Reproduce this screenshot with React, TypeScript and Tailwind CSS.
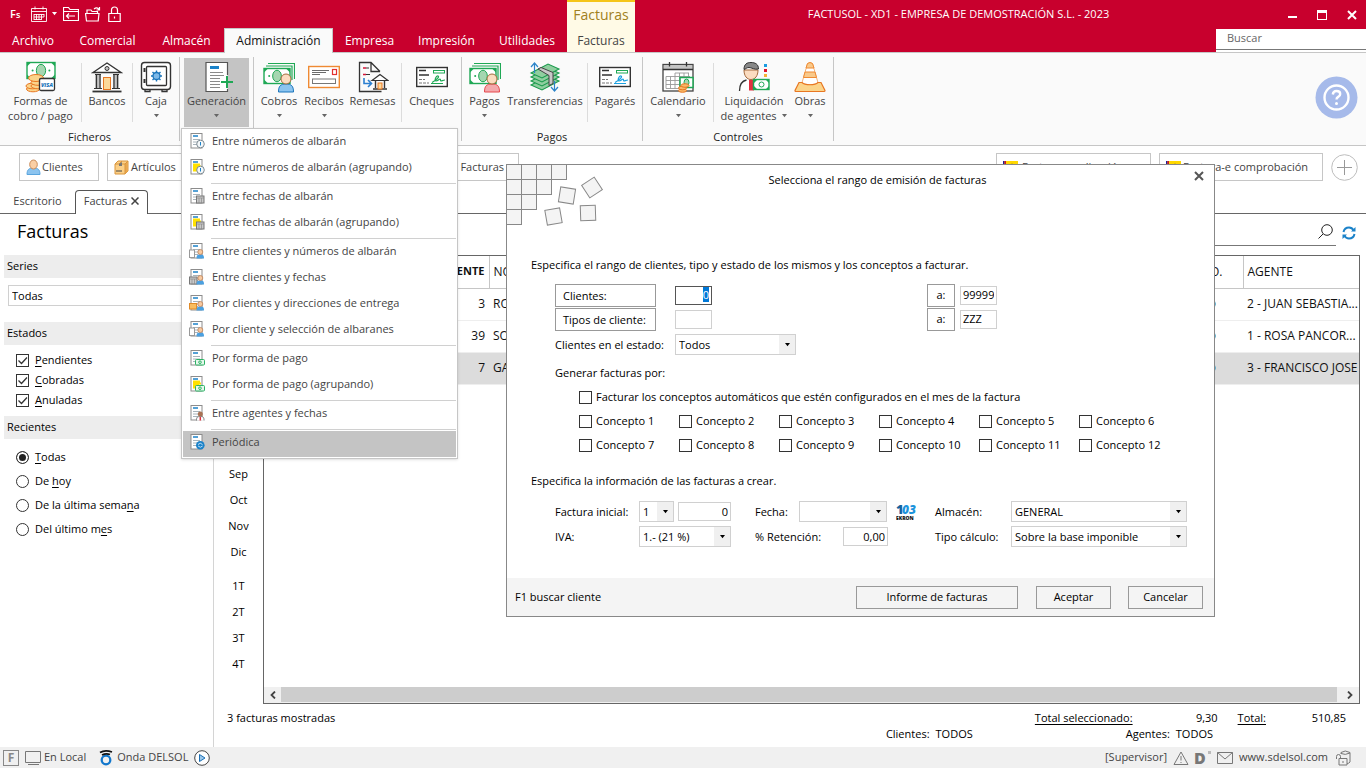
import { useEffect, useRef, type ReactNode } from 'react'

const FONT = "font-['Open_Sans','Noto_Sans',sans-serif]"

interface MenuEntry {
  label: string
  icon: string
  yellow?: boolean
}

const MENU: MenuEntry[][] = [
  [
    { label: 'Entre números de albarán', icon: 'clock' },
    { label: 'Entre números de albarán (agrupando)', icon: 'clock', yellow: true },
  ],
  [
    { label: 'Entre fechas de albarán', icon: 'calendar' },
    { label: 'Entre fechas de albarán (agrupando)', icon: 'calendar', yellow: true },
  ],
  [
    { label: 'Entre clientes y números de albarán', icon: 'client-doc' },
    { label: 'Entre clientes y fechas', icon: 'client-calendar' },
    { label: 'Por clientes y direcciones de entrega', icon: 'client-box' },
    { label: 'Por cliente y selección de albaranes', icon: 'client-doc' },
  ],
  [
    { label: 'Por forma de pago', icon: 'money' },
    { label: 'Por forma de pago (agrupando)', icon: 'money', yellow: true },
  ],
  [{ label: 'Entre agentes y fechas', icon: 'agent' }],
  [{ label: 'Periódica', icon: 'periodic' }],
]

const ROWS = [
  { code: '3', name: 'ROSARIO', agent: '2 - JUAN SEBASTIA...' },
  { code: '39', name: 'SONIA', agent: '1 - ROSA PANCOR...' },
  { code: '7', name: 'GABRIEL', agent: '3 - FRANCISCO JOSE', selected: true },
]

/* ---------- icons ---------- */

function Caret({ className = 'text-[#666]' }: { className?: string }) {
  return (
    <svg width="7" height="4" viewBox="0 0 7 4" className={className}>
      <path d="M1 0h5L3.5 3.2z" fill="currentColor" />
    </svg>
  )
}

function Icon32({ children }: { children: ReactNode }) {
  return (
    <svg width="32" height="32" viewBox="0 0 32 32" fill="none" className="shrink-0">
      {children}
    </svg>
  )
}

function Bill({ x, y, w, h }: { x: number; y: number; w: number; h: number }) {
  return (
    <g>
      <rect x={x} y={y} width={w} height={h} fill="#fff" stroke="#1fa855" strokeWidth="1.4" />
      <path
        d={`M${x} ${y}h4l-4 4zM${x + w} ${y}h-4l4 4zM${x} ${y + h}h4l-4-4zM${x + w} ${y + h}h-4l4-4z`}
        fill="#1fa855"
      />
      <ellipse cx={x + w / 2} cy={y + h / 2} rx={w / 6} ry={h / 2.6} fill="#a5d6b0" stroke="#1fa855" />
      <circle cx={x + w / 5} cy={y + h / 2} r="1" fill="#1fa855" />
      <circle cx={x + w - w / 5} cy={y + h / 2} r="1" fill="#1fa855" />
    </g>
  )
}

function FormasIcon() {
  return (
    <Icon32>
      <Bill x={2} y={1.5} w={28} h={16} />
      <g fill="#fbd48a" stroke="#e87722">
        <ellipse cx="8" cy="28" rx="6.500" ry="2.800" />
        <ellipse cx="7.500" cy="25" rx="6.500" ry="2.800" />
        <ellipse cx="13" cy="25" rx="7" ry="2.800" />
        <ellipse cx="13" cy="21.500" rx="7" ry="2.800" />
        <ellipse cx="11" cy="17" rx="7.500" ry="3.500" />
      </g>
      <rect x="14.500" y="17.500" width="15" height="12" rx="1.500" fill="#fff" stroke="#333" strokeWidth="1.300" />
      <text x="22" y="25.500" fontSize="5.500" fontWeight="800" fontStyle="italic" textAnchor="middle" fill="#1b75bb">VISA</text>
    </Icon32>
  )
}

function BankIcon() {
  return (
    <Icon32>
      <path d="M2 11.500L16 2l14 9.500z" fill="#fff" stroke="#333" strokeWidth="1.300" />
      <circle cx="16" cy="7.500" r="2" fill="#c4c4c4" stroke="#333" />
      <path d="M4 14h6v13H4zM22 14h6v13h-6z" fill="#c4c4c4" />
      <path d="M4 13.500h6M22 13.500h6M5.500 14v13M9 14v13M23 14v13M26.500 14v13M3 27.500h8M21 27.500h8" stroke="#333" strokeWidth="1.200" />
      <rect x="12.500" y="16.500" width="7" height="12" fill="#fcd99a" stroke="#e87722" />
      <path d="M1.500 30.500h29" stroke="#333" strokeWidth="1.800" />
    </Icon32>
  )
}

function SafeIcon() {
  return (
    <Icon32>
      <rect x="1.500" y="1.500" width="29" height="27" rx="3" fill="#fff" stroke="#333" strokeWidth="1.400" />
      <rect x="6.500" y="5.500" width="20" height="19" rx="1" stroke="#333" strokeWidth="1.300" />
      <path d="M4.500 7v4M4.500 18v4" stroke="#333" strokeWidth="2" />
      <path d="M5 29v1.500h5V29M22 29v1.500h5V29" stroke="#333" strokeWidth="1.300" />
      <path d="M16.500 9.500v11M11 15h11M12.500 11l8 8M20.500 11l-8 8" stroke="#1b75bb" strokeWidth="1.400" />
      <circle cx="16.500" cy="15" r="3.500" fill="#7db9e8" stroke="#1b75bb" strokeWidth="1.300" />
    </Icon32>
  )
}

function InvoiceAddIcon() {
  return (
    <Icon32>
      <path d="M5 1.500h21.500v29H5z" fill="#fff" />
      <path d="M26.500 14V1.500H5v29h21.500V28" stroke="#555" strokeWidth="1.200" />
      <path d="M9 5h9v3H9z" fill="#1b82c9" />
      <path d="M9 11.500h13M9 14.500h14M9 17.500h10M9 20.500h10M9 23.500h10M9 26.500h10" stroke="#8a8a8a" />
      <path d="M26 15v12M20 21h12" stroke="#1fa855" strokeWidth="2" />
    </Icon32>
  )
}

function BillPersonIcon({ red }: { red?: boolean }) {
  return (
    <Icon32>
      <path d="M5 2.500h26.500V18M3 5h26v14" stroke="#1fa855" strokeWidth="1.200" />
      <Bill x={1} y={7.500} w={26} h={15} />
      <path d="M15.500 31c0-6 2-8 7.500-8s7.500 2 7.500 8z" fill={red ? '#f4a9ad' : '#8cc4ef'} stroke={red ? '#e5484d' : '#1b75bb'} />
      <circle cx="23" cy="18" r="5" fill="#fbdcc0" stroke="#a56b3f" />
    </Icon32>
  )
}

function ReceiptIcon() {
  return (
    <Icon32>
      <rect x="0.700" y="5.500" width="30.600" height="21" fill="#fff" stroke="#ef8a33" strokeWidth="1.400" />
      <path d="M4 9.500h17M4 11.500h14M4 13.500h8" stroke="#444" strokeWidth="0.800" />
      <rect x="24.500" y="8.500" width="4" height="5" stroke="#e23030" strokeWidth="1.200" />
      <rect x="4.500" y="18" width="23" height="4.500" stroke="#777" />
    </Icon32>
  )
}

function RemesasIcon() {
  return (
    <Icon32>
      <path d="M23 10.500L14 1.500H2.500v29h22M14 2v8.500h9" stroke="#333" strokeWidth="1.300" />
      <path d="M6 7h3M6 13.500h3" stroke="#d6173a" strokeWidth="1.500" />
      <path d="M9 7h3M9 13.500h4" stroke="#333" />
      <path d="M7 17v5.500h7M11 19l3.500 3.500L11 26" stroke="#2c7fd0" strokeWidth="1.600" />
      <path d="M15 19.500l8-6 8 6z" fill="#fff" stroke="#333" strokeWidth="1.200" />
      <path d="M18.500 20v7M27.500 20v7M16 28h14" stroke="#333" strokeWidth="1.400" />
      <rect x="21" y="22" width="4" height="6" fill="#fcd99a" stroke="#e87722" />
    </Icon32>
  )
}

function ChequeIcon({ blue }: { blue?: boolean }) {
  return (
    <Icon32>
      <rect x="0.700" y="6.500" width="30.600" height="19" fill="#fff" stroke="#333" strokeWidth="1.400" />
      <path d="M3 9.500h7M3 14h10" stroke="#333" strokeWidth="1.300" />
      <path d="M3 18.500h6M3 22h10" stroke="#777" strokeDasharray="3 1" />
      <rect x="17.500" y="9.500" width="11" height="2.500" stroke="#1fa855" />
      <path d="M16 21.500c4-2 8-6 6-6.500s-4 5-2 5 3-2 4-2 0 2 1 2 2-1 4-1M15 22.500h12" stroke={blue ? '#1ba0e0' : '#1fa855'} strokeWidth="1.200" />
    </Icon32>
  )
}

function TransferIcon() {
  return (
    <Icon32>
      {[24, 20, 16, 12].map((y) => (
        <path key={y} d={`M2 ${y}l17-9 11 5-17 9z`} fill="#8fce9f" stroke="#1a9a4c" strokeWidth="1.100" />
      ))}
      <path d="M9 8l3-1.500 12 5v11l-4 2v-10z" fill="#c8c8c8" stroke="#444" />
      <path d="M5.500 12V2M2 6l3.500-4L9 6M25.500 20v10M22 26l3.500 4 3.500-4" stroke="#2c84c9" strokeWidth="1.200" />
    </Icon32>
  )
}

function CalendarIcon() {
  return (
    <Icon32>
      <rect x="1" y="3.500" width="30" height="26.500" fill="#fff" stroke="#444" strokeWidth="1.300" />
      <path d="M2 4h28v4.500H2z" fill="#c4c4c4" />
      <path d="M1 8.500h30M7.500 1v4.500M24.500 1v4.500" stroke="#333" strokeWidth="1.300" />
      <path d="M4 15.500h24M4 19.500h24M4 23.500h14M4 27.500h14M4 15.500v12M8.500 15.500v12M13 12v15.500M17.500 12v15.500M22 12v8M26.500 12v8M13 12h14" stroke="#999" strokeWidth="0.900" />
      <rect x="18" y="16.500" width="13" height="10" fill="#fff" stroke="#1fa855" strokeWidth="1.500" />
      <ellipse cx="24.500" cy="21.500" rx="2.500" ry="3.500" fill="#a5d6b0" stroke="#1fa855" />
      <g fill="#f9b868" stroke="#e87722">
        <ellipse cx="20.500" cy="29.500" rx="4" ry="1.800" />
        <ellipse cx="20.500" cy="27" rx="4" ry="1.800" />
        <ellipse cx="23" cy="24.500" rx="4" ry="1.800" />
      </g>
    </Icon32>
  )
}

function AgentIcon() {
  return (
    <Icon32>
      <path d="M1.500 30c0-8 2.500-12 11-12s10 3 11 8" fill="#fff" />
      <path d="M1.500 30c0-7 2-10 7-11" stroke="#333" strokeWidth="1.300" />
      <path d="M11 18.500h4l1 11h-5z" fill="#e23040" />
      <path d="M6 9c0 6 3 9.500 7 9.500S20 15 20 9z" fill="#fbdcc0" stroke="#a56b3f" />
      <path d="M6 8.500C6 3 9 1.500 13 1.500S20.500 3 20.500 8c-4 1-7-1.500-9.500-1.500S8 8 6 8.500z" fill="#888" stroke="#333" />
      <path d="M26 3h3v3h-3z" fill="#1b9be0" />
      <path d="M26 8h3v3h-3z" fill="#e0152b" />
      <path d="M26 13h3v3h-3z" fill="#f5b335" />
      <rect x="15.500" y="18.500" width="15.500" height="10" fill="#fff" stroke="#1fa855" strokeWidth="1.400" />
      <path d="M16 19h3l-3 3zM31 19h-3l3 3zM16 28h3l-3-3zM31 28h-3l3-3z" fill="#1fa855" />
      <circle cx="23.500" cy="23.500" r="2.500" stroke="#1fa855" />
    </Icon32>
  )
}

function ConeIcon() {
  return (
    <Icon32>
      <path d="M13.500 2.500q2.500-2 5 0l6 21h-17z" fill="#fff" stroke="#f3b27a" />
      <path d="M13.500 2.500q2.500-2 5 0l1.500 4.500h-8zM11 11h10l1.500 5.500h-13z" fill="#f9c98a" stroke="#ef8a33" />
      <path d="M5 21.500h3c3 3 13 3 16 0h3l4 8q0 1-1 1H2q-1 0-1-1z" fill="#fbd48a" stroke="#e87722" strokeWidth="1.200" />
    </Icon32>
  )
}

function PersonIcon() {
  return (
    <svg width="15" height="16" viewBox="0 0 15 16">
      <path d="M1 15.500c0-5 2-6.500 6.500-6.500s6.500 1.500 6.500 6.500z" fill="#8cc4ef" stroke="#5aa5de" />
      <ellipse cx="7.500" cy="5.500" rx="3.800" ry="4.500" fill="#fbcfa4" stroke="#c98b59" />
    </svg>
  )
}

function BoxIcon() {
  return (
    <svg width="15" height="15" viewBox="0 0 15 15">
      <path d="M1 4l3-3h10v10l-3 3H1z" fill="#fbcf86" stroke="#d9953c" />
      <path d="M11 4l3-3v10l-3 3z" fill="#e9a850" />
      <path d="M1 4h10v10M11 4l3-3M5 4l3-3" fill="none" stroke="#d9953c" />
      <path d="M5 4l3-2v4H5z" fill="#777" />
      <path d="M3 10v2M5 10v2M7 10v2" stroke="#444" />
    </svg>
  )
}

function MenuIcon({ entry }: { entry: MenuEntry }) {
  const client = entry.icon.startsWith('client')
  return (
    <svg width="16" height="16" viewBox="0 0 16 16" fill="none">
      <rect x="2" y="0.500" width="11" height="14.500" fill="#fff" stroke="#8c8c8c" />
      <path d="M4 3h5" stroke="#1b82c9" strokeWidth="1.500" />
      {entry.yellow ? (
        <path d="M4 5.500h7M4 7.500h8M4 9.500h6M4 11.500h5" stroke="#ffe100" strokeWidth="2" />
      ) : (
        <path d="M4 6.500h7M4 9h7M4 11.500h5" stroke="#a8b4bb" />
      )}
      {entry.icon === 'clock' && (
        <>
          <circle cx="11.500" cy="11" r="3.800" fill="#f4f8fa" stroke="#7d8a92" />
          <path d="M11.500 9v3.500" stroke="#1b82c9" />
        </>
      )}
      {(entry.icon === 'calendar' || entry.icon === 'client-calendar') && (
        <g transform={client ? 'translate(-7 0)' : undefined}>
          <rect x="7.500" y="8" width="7.500" height="7" fill="#c9c9c9" stroke="#777" />
          <path d="M7.500 10h7.500M10 10v5M12.500 10v5" stroke="#8a8a8a" strokeWidth="0.700" />
        </g>
      )}
      {entry.icon === 'client-doc' && <rect x="0.500" y="7" width="5" height="7.500" fill="#fff" stroke="#999" />}
      {entry.icon === 'client-box' && <rect x="0.500" y="8.500" width="7" height="5.500" fill="#f9bd5f" stroke="#e08a28" />}
      {client && (
        <>
          <path d="M7.500 15.500c0-3.500 1-4 3.800-4s3.700.5 3.700 4z" fill="#4ba0e0" />
          <circle cx="11.300" cy="9" r="2.500" fill="#f6c9a0" stroke="#b5764a" strokeWidth="0.700" />
        </>
      )}
      {entry.icon === 'money' && (
        <>
          <rect x="6.500" y="9.500" width="9" height="5.500" rx="1" fill="#e6f7ec" stroke="#2bb364" />
          <circle cx="11" cy="12.200" r="1.300" stroke="#2bb364" />
        </>
      )}
      {entry.icon === 'agent' && (
        <>
          <path d="M7.500 15.500c0-3.500 1-4 3.800-4s3.700.5 3.700 4" fill="#fff" stroke="#777" />
          <path d="M11.300 12v3.500" stroke="#e23040" strokeWidth="1.500" />
          <circle cx="11.300" cy="9" r="2.500" fill="#a87254" />
        </>
      )}
      {entry.icon === 'periodic' && (
        <>
          <circle cx="11.300" cy="11.200" r="4.300" fill="#1b82c9" />
          <path d="M9 10.500q2.300-2.500 4.500 0M13.600 12q-2.300 2.500-4.500 0" stroke="#bfe0f5" />
        </>
      )}
    </svg>
  )
}

/* ---------- ribbon ---------- */

function RibbonButton({ icon, label, second, caret, className }: {
  icon: ReactNode
  label: string
  second?: string
  caret?: boolean
  className: string
}) {
  return (
    <button className={`flex h-[69px] shrink-0 flex-col items-center whitespace-nowrap pt-[3px] text-[11px] leading-[15px] text-[#444] ${className}`}>
      {icon}
      <span>{label}</span>
      <span className="flex h-[15px] items-center gap-1">
        {second}
        {caret && <Caret />}
      </span>
    </button>
  )
}

function RibbonGroup({ title, children }: { title: string; children: ReactNode }) {
  return (
    <div className="my-1 flex shrink-0 flex-col border-r border-[#c6c6c6] pt-px">
      <div className="flex">{children}</div>
      <div className="pt-[2px] text-center text-[11px] leading-4 text-[#222]">{title}</div>
    </div>
  )
}

function RibbonSep() {
  return <span className="mt-[5px] h-[59px] w-px shrink-0 bg-[#dcdcdc]" />
}

function Tab({ label, className }: { label: string; className: string }) {
  return <button className={`h-6 shrink-0 pt-[2px] text-center text-xs text-white ${className}`}>{label}</button>
}

function Header() {
  return (
    <header className="flex h-[52px] bg-[#c8002d] text-white">
      <div className="flex w-[567px] shrink-0 flex-col">
        <div className="flex h-7 items-center pl-[10px]">
          <span className="w-[21px] text-[11px] font-semibold">F<span className="text-[9px]">s</span></span>
          <button aria-label="Calendario" className="flex items-center gap-1">
            <svg width="16" height="16" viewBox="0 0 16 16" fill="none" stroke="#fff">
              <path d="M.5 2.500h15v13H.5zM.5 5.500h15M4 .5v3M12 .5v3M3 8.500h10M3 11h10M3 13.500h7M3 8v6M5.500 8v6M8 8v6M10.500 8v6M13 8v3" strokeWidth="0.900" />
            </svg>
            <Caret className="text-white" />
          </button>
          <button aria-label="Volver" className="ml-[5px]">
            <svg width="16" height="16" viewBox="0 0 16 16" fill="none" stroke="#fff" strokeWidth="1.200">
              <path d="M.5 14.500v-13h5l1.500 2h8.500v11zM.5 5.500h15M3.500 10H12M6 7.500L3.500 10 6 12.500" />
            </svg>
          </button>
          <button aria-label="Abrir" className="ml-[6px]">
            <svg width="16" height="16" viewBox="0 0 16 16" fill="none" stroke="#fff" strokeWidth="1.200">
              <path d="M2 7.500V4h4l1 1.500h5.500v2M.5 7.500h13.500l-.8 7.500H1.500zM9 3q3-2.500 5 .5M14.500 1v3H11.500" />
            </svg>
          </button>
          <button aria-label="Bloquear" className="ml-[7px]">
            <svg width="13" height="16" viewBox="0 0 13 16" fill="none" stroke="#fff" strokeWidth="1.200">
              <path d="M.8 7.500h11.400v8H.8zM3.500 7.500V4a3 3 0 016 0v3.500M6.500 10.500v2" />
            </svg>
          </button>
        </div>
        <nav className="flex h-6">
          <Tab label="Archivo" className="w-[66px]" />
          <Tab label="Comercial" className="w-[83px]" />
          <Tab label="Almacén" className="w-[75px]" />
          <button className="relative z-10 -mb-px h-[25px] w-[109px] shrink-0 border border-b-0 border-[#c6c6c6] bg-[#fafafa] text-center text-xs text-[#111]">
            Administración
          </button>
          <Tab label="Empresa" className="w-[73px]" />
          <Tab label="Impresión" className="w-[81px]" />
          <Tab label="Utilidades" className="w-[80px]" />
        </nav>
      </div>
      <div className="flex w-[68px] shrink-0 flex-col items-center border-t-2 border-[#f5c518] bg-[#fffae6]">
        <span className="h-[26px] text-sm leading-[26px] text-[#a08020]">Facturas</span>
        <button className="h-6 pt-[2px] text-xs text-[#444]">Facturas</button>
      </div>
      <div className="flex min-w-0 flex-1 flex-col">
        <div className="flex h-[29px] items-center">
          <h1 className="flex-1 truncate text-center text-[11px]">FACTUSOL - XD1 - EMPRESA DE DEMOSTRACIÓN S.L. - 2023</h1>
          <div className="flex w-[84px] items-center gap-5 pl-[6px]">
            <button aria-label="Minimizar"><span className="mt-1 block h-[2px] w-[9px] bg-white" /></button>
            <button aria-label="Maximizar"><span className="block h-[10px] w-[10px] border border-t-[3px] border-white" /></button>
            <button aria-label="Cerrar">
              <svg width="10" height="10" viewBox="0 0 10 10" stroke="#fff" strokeWidth="2"><path d="M1 1l8 8M9 1L1 9" /></svg>
            </button>
          </div>
        </div>
        <div className="flex h-[23px] w-[150px] flex-col self-end bg-white">
          <input aria-label="Buscar" placeholder="Buscar" className="h-[21px] w-full border-b border-[#777] px-[11px] pb-[3px] text-[11px] text-[#333] outline-none placeholder:text-[#666]" />
        </div>
      </div>
    </header>
  )
}

function DropMenu() {
  return (
    <div role="menu" className="absolute left-[181px] top-[75px] z-20 w-[277px] border border-[#c6c6c6] bg-white p-px shadow-sm">
      {MENU.map((group, gi) => (
        <div key={gi}>
          {gi > 0 && <div className="ml-7 h-[3px] py-px"><div className="h-px bg-[#d0d0d0]" /></div>}
          {group.map((entry) => (
            <button
              key={entry.label}
              role="menuitem"
              className={`flex h-[26px] w-full items-center pb-1 pl-[6px] text-left text-[11px] text-[#444] ${entry.icon === 'periodic' ? 'bg-[#c4c4c4]' : ''}`}
            >
              <MenuIcon entry={entry} />
              <span className="ml-[7px] whitespace-nowrap">{entry.label}</span>
            </button>
          ))}
        </div>
      ))}
    </div>
  )
}

function Ribbon() {
  return (
    <div className="relative flex h-[94px] border-y border-[#c6c6c6] bg-[#fafafa]">
      <RibbonGroup title="Ficheros">
        <RibbonButton icon={<FormasIcon />} label="Formas de" second="cobro / pago" className="w-[81px]" />
        <RibbonSep />
        <RibbonButton icon={<BankIcon />} label="Bancos" className="w-[50px]" />
        <RibbonSep />
        <RibbonButton icon={<SafeIcon />} label="Caja" caret className="w-[46px]" />
      </RibbonGroup>
      <RibbonGroup title="">
        <RibbonButton icon={<InvoiceAddIcon />} label="Generación" caret className="mx-1 w-[65px] bg-[#c4c4c4]" />
      </RibbonGroup>
      <RibbonGroup title="">
        <RibbonButton icon={<BillPersonIcon />} label="Cobros" caret className="w-[50px]" />
        <RibbonButton icon={<ReceiptIcon />} label="Recibos" caret className="w-[40px]" />
        <RibbonButton icon={<RemesasIcon />} label="Remesas" className="w-[57px]" />
        <RibbonSep />
        <RibbonButton icon={<ChequeIcon />} label="Cheques" className="w-[59px]" />
      </RibbonGroup>
      <RibbonGroup title="Pagos">
        <RibbonButton icon={<BillPersonIcon red />} label="Pagos" caret className="w-[45px]" />
        <RibbonButton icon={<TransferIcon />} label="Transferencias" className="mr-1 w-[76px]" />
        <RibbonSep />
        <RibbonButton icon={<ChequeIcon blue />} label="Pagarés" className="w-[54px]" />
      </RibbonGroup>
      <RibbonGroup title="Controles">
        <RibbonButton icon={<CalendarIcon />} label="Calendario" caret className="w-[70px]" />
        <RibbonSep />
        <RibbonButton icon={<AgentIcon />} label="Liquidación" second="de agentes" caret className="w-[80px]" />
        <RibbonButton icon={<ConeIcon />} label="Obras" caret className="mr-[7px] w-[32px]" />
      </RibbonGroup>
      <button aria-label="Ayuda" className="mr-2 ml-auto self-center pb-1">
        <svg width="43" height="43" viewBox="0 0 43 43" fill="none">
          <circle cx="21.500" cy="21.500" r="21" fill="#a6baea" />
          <circle cx="21.500" cy="21.500" r="12" stroke="#fff" strokeWidth="2.400" />
          <path d="M17.800 18.500q.4-3.500 3.700-3.500 3.700 0 3.700 3 0 1.800-2 2.900-1.700 1-1.700 2.700" stroke="#fff" strokeWidth="2.400" />
          <circle cx="21.500" cy="27.500" r="1.500" fill="#fff" />
        </svg>
      </button>
      <DropMenu />
    </div>
  )
}

/* ---------- page ---------- */

const shortcut = 'flex h-7 shrink-0 items-center border border-[#c6c6c6] bg-white text-[11px] text-[#444] whitespace-nowrap'

function SpainFlag() {
  return (
    <svg width="15" height="12" viewBox="0 0 15 12">
      <path d="M0 0h15v12H0z" fill="#ffd800" />
      <path d="M0 0h1.500v12H0z" fill="#1c1c9c" />
      <path d="M1.500 0h1.500v12H1.500z" fill="#c8102e" />
      <path d="M9 2l2 8H7z" fill="#333" />
    </svg>
  )
}

function Shortcuts() {
  return (
    <div className="flex h-[41px] items-center pt-px pr-2 pl-[19px]">
      <button className={`${shortcut} w-[80px] gap-px pl-[6px]`}><PersonIcon />Clientes</button>
      <button className={`${shortcut} ml-2 w-[80px] gap-[2px] pl-[6px]`}><BoxIcon />Artículos</button>
      <button className={`${shortcut} ml-[244px] w-[88px] justify-end pr-[14px]`}>Facturas</button>
      <div className="flex-1" />
      <button className={`${shortcut} w-[155px] gap-1 pl-[6px]`}><SpainFlag />Factura-e aplicación</button>
      <button className={`${shortcut} ml-2 w-[164px] gap-[2px] pl-[6px]`}><SpainFlag />Factura-e comprobación</button>
      <button aria-label="Añadir" className="ml-2">
        <svg width="27" height="27" viewBox="0 0 27 27" fill="none" stroke="#bdbdbd">
          <circle cx="13.500" cy="13.500" r="12.800" />
          <path d="M13.500 6v15M6 13.500h15" stroke="#999" />
        </svg>
      </button>
    </div>
  )
}

function DocTabs() {
  return (
    <div className="flex h-[27px] items-end border-b border-[#666] text-[11px] text-[#444]">
      <button className="h-[23px] w-[75px] pb-px">Escritorio</button>
      <div className="relative -mb-px flex h-[24px] w-[73px] items-center justify-center gap-1 rounded-t border border-b-0 border-[#555] bg-white pb-[3px]">
        <button>Facturas</button>
        <button aria-label="Cerrar Facturas">
          <svg width="8" height="8" viewBox="0 0 8 8" stroke="#444" strokeWidth="1.500"><path d="M.5.5l7 7M7.500.5l-7 7" /></svg>
        </button>
      </div>
    </div>
  )
}

function SideTitle({ children }: { children: ReactNode }) {
  return <h3 className="ml-1 h-[23px] bg-[#ededed] pl-[3px] text-[11px] leading-[22px]">{children}</h3>
}

const boxClass = 'h-[13px] w-[13px] shrink-0 appearance-none border border-[#333] bg-white'

function SideCheck({ k, rest }: { k: string; rest: string }) {
  return (
    <label className="flex h-5 items-center gap-[6px]">
      <span className="relative flex">
        <input type="checkbox" defaultChecked className={`${boxClass} peer`} />
        <svg width="13" height="13" viewBox="0 0 13 13" fill="none" stroke="#333" strokeWidth="1.300" className="pointer-events-none absolute inset-0 hidden peer-checked:block">
          <path d="M2.500 6.500l3 3 5.500-6" />
        </svg>
      </span>
      <span><u className="underline-offset-2">{k}</u>{rest}</span>
    </label>
  )
}

function SideRadio({ pre = '', k, post, checked }: { pre?: string; k: string; post: string; checked?: boolean }) {
  return (
    <label className="flex h-6 items-center gap-[6px]">
      <input type="radio" name="recientes" defaultChecked={checked} className="h-[13px] w-[13px] appearance-none rounded-full border border-[#333] bg-white checked:bg-[#222] checked:shadow-[inset_0_0_0_2px_#fff]" />
      <span>{pre}<u className="underline-offset-2">{k}</u>{post}</span>
    </label>
  )
}

function Sidebar() {
  return (
    <aside className="w-[214px] shrink-0 border-r border-[#d4d4d4] text-[11px] text-black">
      <h2 className="h-[41px] pt-[3px] pl-[17px] text-lg">Facturas</h2>
      <SideTitle>Series</SideTitle>
      <input aria-label="Series" defaultValue="Todas" className="mt-[7px] mb-4 ml-2 h-[21px] w-[198px] border border-[#d0d0d0] px-[3px] outline-none" />
      <SideTitle>Estados</SideTitle>
      <div className="pt-[5px] pb-[6px] pl-4">
        <SideCheck k="P" rest="endientes" />
        <SideCheck k="C" rest="obradas" />
        <SideCheck k="A" rest="nuladas" />
      </div>
      <SideTitle>Recientes</SideTitle>
      <div className="pt-[6px] pl-4">
        <SideRadio k="T" post="odas" checked />
        <SideRadio pre="De " k="h" post="oy" />
        <SideRadio pre="De la última sema" k="n" post="a" />
        <SideRadio pre="Del último m" k="e" post="s" />
      </div>
    </aside>
  )
}

function InvoiceTable() {
  return (
    <div className="flex min-w-0 flex-1 flex-col border border-[#666]">
      <table className="w-full table-fixed text-xs text-[#111]">
        <thead>
          <tr className="h-8 border-b border-[#c6c6c6]">
            <th className="w-[225px] border-r border-[#c6c6c6] pr-1 text-right text-[11px] font-bold">CLIENTE</th>
            <th className="pl-1 text-left font-normal">NOMBRE</th>
            <th className="w-[63px] border-r border-[#c6c6c6] pr-5 text-right font-normal">DTO.</th>
            <th className="w-[116px] pl-1 text-left font-normal">AGENTE</th>
          </tr>
        </thead>
        <tbody>
          {ROWS.map((row) => (
            <tr key={row.code} className={`h-8 border-b border-[#eee] ${row.selected ? 'bg-[#dcdcdc]' : ''}`}>
              <td className="pr-1 text-right">{row.code}</td>
              <td className="pl-1">{row.name}</td>
              <td className="pr-[27px]"><span className="ml-auto block h-2 w-2 rounded-full border border-[#55aacc]" /></td>
              <td className="overflow-hidden pl-1 whitespace-nowrap">{row.agent}</td>
            </tr>
          ))}
        </tbody>
      </table>
      <div className="mt-auto flex h-4 items-stretch bg-[#f0f0f0]">
        <button aria-label="Desplazar a la izquierda" className="flex w-[17px] items-center justify-center">
          <svg width="6" height="8" viewBox="0 0 6 8" fill="none" stroke="#444" strokeWidth="1.800"><path d="M5 .5L1.500 4 5 7.500" /></svg>
        </button>
        <div className="mb-px flex-1 bg-[#cdcdcd]" />
        <button aria-label="Desplazar a la derecha" className="flex w-[22px] items-center justify-center pl-1">
          <svg width="6" height="8" viewBox="0 0 6 8" fill="none" stroke="#444" strokeWidth="1.800"><path d="M1 .5L4.500 4 1 7.500" /></svg>
        </button>
      </div>
    </div>
  )
}

function Main() {
  return (
    <main className="flex min-w-0 flex-1 flex-col text-[11px] text-black">
      <div className="flex h-[41px] justify-end gap-[6px] pr-[10px]">
        <div className="flex h-8 w-[400px] items-center justify-end border-b border-[#777] pt-1 pr-[3px]">
          <button aria-label="Buscar facturas">
            <svg width="15" height="15" viewBox="0 0 15 15" fill="none" stroke="#222"><circle cx="9" cy="6" r="5.300" /><path d="M5 10L.5 14.500" /></svg>
          </button>
        </div>
        <button aria-label="Actualizar" className="mb-1">
          <svg width="14" height="14" viewBox="0 0 14 14" fill="none" stroke="#1b82c9" strokeWidth="2">
            <path d="M1.500 6q1-4.500 5.500-4.500 3 0 4.800 3M12.500 8q-1 4.500-5.500 4.500-3 0-4.800-3" />
            <path d="M13.500 1v4.500H9zM.5 13V8.500H5z" fill="#1b82c9" stroke="none" />
          </svg>
        </button>
      </div>
      <div className="flex min-h-0 flex-1 pr-[6px]">
        <div className="flex w-[49px] shrink-0 flex-col justify-end pb-[27px] text-center leading-[26px]">
          {['Sep', 'Oct', 'Nov', 'Dic'].map((m) => <button key={m}>{m}</button>)}
          <span className="h-2" />
          {['1T', '2T', '3T', '4T'].map((q) => <button key={q}>{q}</button>)}
        </div>
        <InvoiceTable />
      </div>
      <div className="flex h-[43px] shrink-0 justify-between pt-[6px] pr-5 pl-[13px] leading-4">
        <p>3 facturas mostradas</p>
        <div>
          <p className="flex justify-end">
            <u className="underline-offset-2">Total seleccionado:</u>
            <span className="w-[85px] text-right">9,30</span>
            <u className="ml-5 underline-offset-2">Total:</u>
            <span className="w-20 text-right">510,85</span>
          </p>
          <p className="flex justify-end gap-[6px] pr-[133px]">
            <span>Clientes:</span>
            <span>TODOS</span>
            <span className="ml-[147px]">Agentes:</span>
            <span>TODOS</span>
          </p>
        </div>
      </div>
    </main>
  )
}

function StatusBar() {
  return (
    <footer className="flex h-[21px] shrink-0 items-center bg-[#f0f0f0] px-[3px] text-[11px] text-[#444]">
      <span className="flex h-4 w-4 items-center justify-center border border-[#888] text-xs font-bold text-[#888]">F</span>
      <svg width="16" height="14" viewBox="0 0 16 14" fill="none" stroke="#777" className="ml-[6px]"><path d="M.5.500h15v11H.5zM3 13.500h11" /></svg>
      <span className="ml-[3px]">En Local</span>
      <svg width="14" height="17" viewBox="0 0 14 17" fill="none" className="ml-[13px]">
        <circle cx="7" cy="11" r="4.300" stroke="#1277cc" strokeWidth="2.300" />
        <path d="M1 3.500Q6 .500 13 3M3 6q4-2 8-.5" stroke="#111" strokeWidth="1.800" />
      </svg>
      <span className="ml-1">Onda DELSOL</span>
      <button aria-label="Reproducir" className="ml-[6px]">
        <svg width="16" height="16" viewBox="0 0 16 16" fill="none"><circle cx="8" cy="8" r="7.300" stroke="#444" fill="#fff" /><path d="M5.500 4.500l5.500 3.500-5.500 3.500z" fill="#9cc9ec" stroke="#1b6fb5" /></svg>
      </button>
      <span className="ml-auto">[Supervisor]</span>
      <svg width="16" height="14" viewBox="0 0 16 14" fill="none" stroke="#777" className="ml-[6px]"><path d="M8 1l7 12.500H1zM8 5v4.500M8 11v1" /></svg>
      <span className="ml-[5px] flex h-4 w-[17px] items-start justify-between">
        <span className="text-base leading-4 font-extrabold text-[#777]">D</span>
        <span className="mt-px h-[3px] w-[3px] bg-[#bbb]" />
      </span>
      <svg width="16" height="12" viewBox="0 0 16 12" fill="none" stroke="#777" className="ml-[6px]"><path d="M.5.500h15v11H.5zM.5.500L8 7l7.500-6.500" /></svg>
      <a href="#web" className="ml-[6px]">www.sdelsol.com</a>
      <svg width="16" height="16" viewBox="0 0 16 16" fill="none" stroke="#777" className="ml-[7px] mr-3"><path d="M4 8.500h8v6.500H4zM1.500 9V6.500a2 2 0 014 0v2M6 4V2.500q4-3 9 0V12q-1 1.500-3 1.500M6 3.500q4 2 9-.5M8 11v2" /></svg>
    </footer>
  )
}

/* ---------- dialog ---------- */

const field = 'h-[19px] border bg-white px-[2px] pb-px outline-none'
const pushButton = 'h-[23px] border border-[#999] bg-white'
const wideButton = 'h-[23px] border border-[#999] bg-[#f4f4f4]'

function Select({ id, value, className, label }: { id?: string; value: string; className: string; label?: string }) {
  return (
    <span className={`relative block h-[21px] border border-[#d0d0d0] bg-white ${className}`}>
      <select id={id} aria-label={label} defaultValue={value} className="h-full w-full appearance-none bg-transparent pl-[3px] outline-none">
        <option value={value}>{value}</option>
      </select>
      <span className="pointer-events-none absolute inset-y-0 right-0 flex w-4 items-center justify-center bg-[#f0f0f0]">
        <Caret className="text-black" />
      </span>
    </span>
  )
}

function Squares() {
  const grid = [4, 3, 2, 1]
  return (
    <svg width="100" height="64" viewBox="0 0 100 64" fill="#f4f4f4" stroke="#888" className="pointer-events-none absolute -top-px -left-px">
      {grid.map((n, r) =>
        Array.from({ length: n }, (_, c) => (
          <rect key={`${r}-${c}`} x={c * 15 + 0.5} y={r * 15 + 0.5} width="15" height="15" />
        )),
      )}
      <rect x="53.500" y="24" width="15" height="15" transform="rotate(9 61 31.500)" />
      <rect x="78.500" y="16" width="15" height="15" transform="rotate(-33 86 23.500)" />
      <rect x="40" y="45" width="15" height="15" transform="rotate(-10 47.500 52.500)" />
      <rect x="74.500" y="41.500" width="15" height="15" transform="rotate(-2 82 49)" />
    </svg>
  )
}

function Concept({ n }: { n: number }) {
  return (
    <label className="flex h-6 items-center gap-1">
      <input type="checkbox" className={boxClass} />
      Concepto {n}
    </label>
  )
}

function InvoiceDialog() {
  const fromRef = useRef<HTMLInputElement>(null)

  useEffect(() => {
    fromRef.current?.focus()
    fromRef.current?.select()
  }, [])

  return (
    <div role="dialog" aria-label="Selecciona el rango de emisión de facturas" className="absolute top-[164px] left-[506px] z-30 w-[709px] border border-[#888] bg-white text-[11px] leading-4 text-black">
      <Squares />
      <div className="flex h-[92px] items-start pt-[6px] pr-[10px]">
        <h2 className="flex-1 pt-px pl-[54px] text-center">Selecciona el rango de emisión de facturas</h2>
        <button aria-label="Cerrar">
          <svg width="10" height="10" viewBox="0 0 10 10" stroke="#555" strokeWidth="2"><path d="M1 1l8 8M9 1L1 9" /></svg>
        </button>
      </div>
      <form className="px-6" onSubmit={(e) => e.preventDefault()}>
        <p>Especifica el rango de clientes, tipo y estado de los mismos y los conceptos a facturar.</p>
        <div className="mt-[10px] grid grid-cols-[120px_252px_33px_37px] items-center pl-6">
          <div className="h-6 pt-px"><button type="button" className={`${pushButton} w-[101px] pl-[7px] text-left`}>Clientes:</button></div>
          <div className="flex">
            <input ref={fromRef} aria-label="Cliente desde" defaultValue="0" className={`${field} w-[37px] border-[#555] text-right selection:bg-[#0078d7] selection:text-white`} />
          </div>
          <button type="button" className={`${pushButton} w-7`}>a:</button>
          <input aria-label="Cliente hasta" defaultValue="99999" className={`${field} w-[37px] border-[#d0d0d0] px-0 text-right`} />
          <div className="h-6 pt-px"><button type="button" className={`${pushButton} w-[101px] pl-[7px] text-left`}>Tipos de cliente:</button></div>
          <div className="flex"><input aria-label="Tipo desde" className={`${field} w-[37px] border-[#d0d0d0]`} /></div>
          <button type="button" className={`${pushButton} w-7`}>a:</button>
          <input aria-label="Tipo hasta" defaultValue="ZZZ" className={`${field} w-[37px] border-[#d0d0d0]`} />
          <label htmlFor="estado" className="pt-[3px]">Clientes en el estado:</label>
          <div className="h-6 pt-[3px]"><Select id="estado" value="Todos" className="w-[121px]" /></div>
        </div>
        <div className="pl-6">
          <p className="mt-[10px]">Generar facturas por:</p>
          <label className="mt-1 flex h-6 items-center gap-1 pl-6">
            <input type="checkbox" className={boxClass} />
            Facturar los conceptos automáticos que estén configurados en el mes de la factura
          </label>
          <div className="grid grid-cols-[repeat(6,100px)] pl-6">
            {Array.from({ length: 12 }, (_, i) => <Concept key={i} n={i + 1} />)}
          </div>
        </div>
        <p className="mt-4">Especifica la información de las facturas a crear.</p>
        <div className="mt-[10px] grid grid-cols-[84px_116px_133px_47px_76px_176px] items-center pl-6 [&>*]:my-[2px]">
          <label htmlFor="inicial">Factura inicial:</label>
          <div className="flex items-center gap-1">
            <Select label="Serie" value="1" className="w-[35px]" />
            <input id="inicial" defaultValue="0" className={`${field} w-[53px] border-[#d0d0d0] text-right`} />
          </div>
          <div className="flex items-center justify-between pr-px">
            <label htmlFor="fecha">Fecha:</label>
            <Select id="fecha" value="" className="w-[88px]" />
          </div>
          <svg width="20" height="17" viewBox="0 0 20 17" className="ml-2" fontWeight="800">
            <text x="0" y="11" fontSize="13" fill="#14639e">1</text>
            <text x="6" y="11" fontSize="12" fontStyle="italic" fill="#1d94dc">03</text>
            <text x="0" y="17" fontSize="5" fill="#111">EKRON</text>
          </svg>
          <label htmlFor="almacen">Almacén:</label>
          <Select id="almacen" value="GENERAL" className="w-full" />
          <label htmlFor="iva">IVA:</label>
          <Select id="iva" value="1.- (21 %)" className="w-[92px]" />
          <div className="flex items-center justify-between">
            <label htmlFor="retencion">% Retención:</label>
            <input id="retencion" defaultValue="0,00" className={`${field} w-[45px] border-[#d0d0d0] text-right`} />
          </div>
          <label htmlFor="calculo" className="col-start-5">Tipo cálculo:</label>
          <Select id="calculo" value="Sobre la base imponible" className="w-full" />
        </div>
      </form>
      <div className="mt-[29px] flex h-[38px] items-center bg-[#f4f4f4] pr-[11px] pl-2">
        <span className="flex-1">F1 buscar cliente</span>
        <button className={`${wideButton} w-[162px]`}>Informe de facturas</button>
        <button className={`${wideButton} ml-[18px] w-[75px]`}>Aceptar</button>
        <button className={`${wideButton} ml-[17px] w-[75px]`}>Cancelar</button>
      </div>
    </div>
  )
}

export default function App() {
  return (
    <div className={`relative flex h-screen flex-col overflow-hidden bg-white ${FONT}`}>
      <Header />
      <Ribbon />
      <Shortcuts />
      <DocTabs />
      <div className="flex min-h-0 flex-1">
        <Sidebar />
        <Main />
      </div>
      <StatusBar />
      <InvoiceDialog />
    </div>
  )
}
